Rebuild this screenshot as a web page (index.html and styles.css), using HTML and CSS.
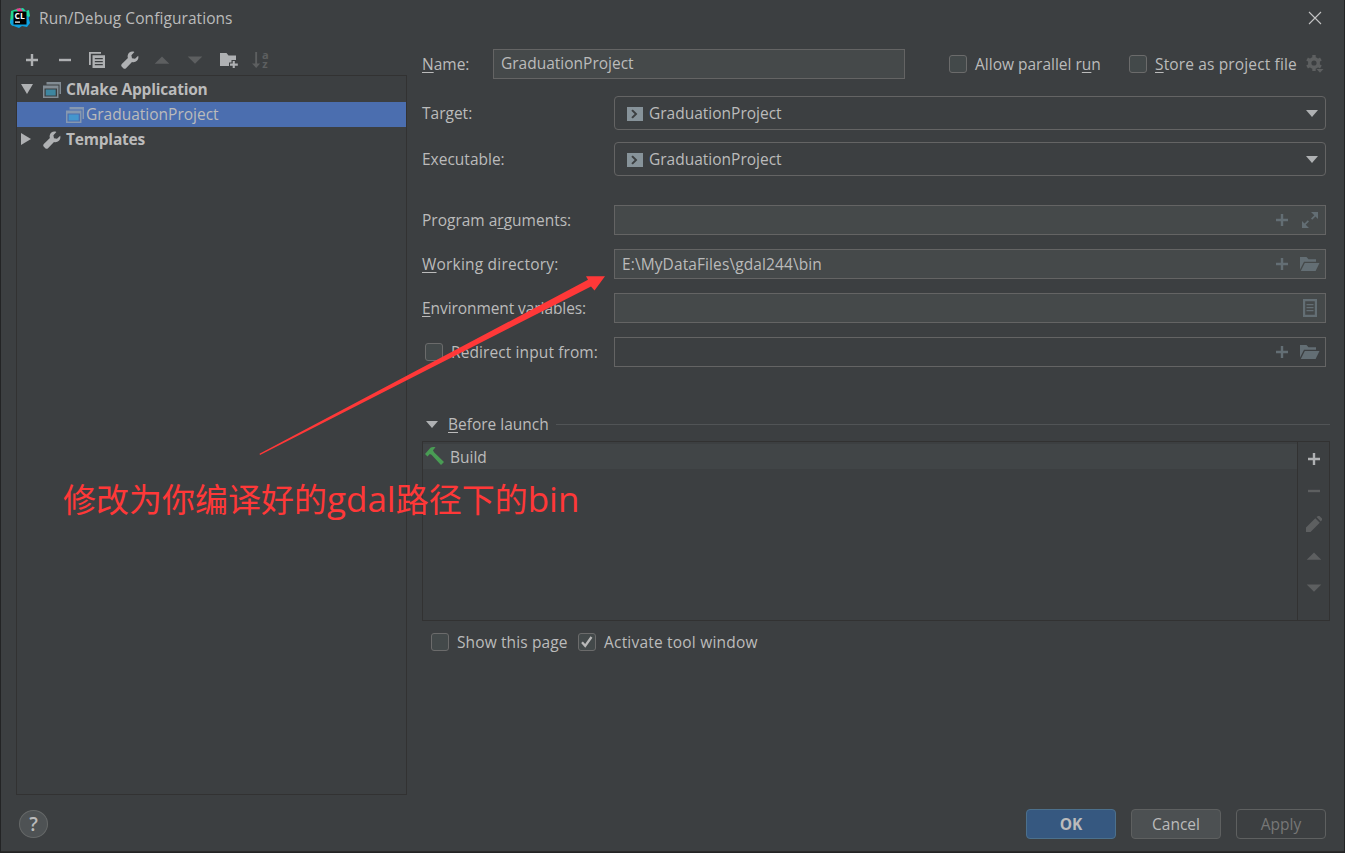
FILE: index.html
```
<!DOCTYPE html>
<html lang="en">
<head>
  <meta charset="UTF-8">
  <meta name="viewport" content="width=device-width, initial-scale=1.0">
  <title>Run/Debug Configurations</title>
  <link rel="stylesheet" href="styles.css">
</head>
<body>

  <!-- Shared icons -->
  <svg class="sprite" width="0" height="0">
    <symbol id="plus" viewBox="0 0 16 16"><path d="M6.8 2h2.4v4.8H14v2.4H9.2V14H6.8V9.2H2V6.8h4.8z"/></symbol>
    <symbol id="minus" viewBox="0 0 16 16"><path d="M2 6.8h12v2.4H2z"/></symbol>
    <symbol id="wrench" viewBox="0 0 18 18"><path d="M17.2 4.8l-3.2 3-3-.6-.6-3L13.4 1C10.6-.2 7.3 1.3 6.7 4.4c-.2.9-.1 1.7.2 2.500L.8 12.900c-.8.8-.8 2 0 2.800l1.500 1.500c.8.800 1.900.8 2.700 0l6-6.200c3.800 1 7.300-2.200 6.200-6.200z"/></symbol>
    <symbol id="up" viewBox="0 0 16 16"><path d="M8 4.500l7.300 7.300H.7z"/></symbol>
    <symbol id="down" viewBox="0 0 16 16"><path d="M8 11.800L.7 4.500h14.600z"/></symbol>
    <symbol id="app" viewBox="0 0 18 16">
      <path d="M3.500 0H18v12h-1.500V2.500h-13z" opacity=".75"/>
      <path fill-rule="evenodd" d="M0 3.500h15.500V16H0zM1.500 6.500v8H14v-8z" opacity=".75"/>
      <path class="app-fill" d="M2.700 7.500h10v6h-10z"/>
    </symbol>
    <symbol id="target" viewBox="0 0 16 14"><path fill-rule="evenodd" d="M0 0h16v14H0zM4.300 3.700L7.700 7l-3.400 3.300L5.800 11.600 10.400 7 5.800 2.400z"/></symbol>
    <symbol id="folder" viewBox="0 0 20 14"><path d="M0 0h6.500l2 2.300H16v2.500H4L0 12.500z"/><path d="M4.800 6H19.500L15.600 14H.8z"/></symbol>
  </svg>

  <div class="dialog">
    <header class="titlebar">
      <svg class="logo" viewBox="0 0 20 20">
        <path d="M1 3l7-2.500L11 8 3 18 0 15z" fill="#1fd68b"/>
        <path d="M8 1l5-1 3 3 3-1 1 6-6 6z" fill="#20d9a5"/>
        <path d="M6 1l4-1 3 3-3 3z" fill="#ec3c8f"/>
        <path d="M0 13l4-3 14-2 2 7-3 4-5-1-3 2-8-3z" fill="#0d9fe0"/>
        <path d="M3.500 3.500h13v13h-13z" fill="#000"/>
        <path d="M5 13.500h5v1.200H5z" fill="#fff"/>
        <text x="4.500" y="10.500">CL</text>
      </svg>
      <span class="title">Run/Debug Configurations</span>
      <svg class="close" viewBox="0 0 14 14"><path d="M1 1l12 12M13 1L1 13"/></svg>
    </header>

    <main class="content">
      <!-- Configuration tree -->
      <section class="sidebar">
        <div class="toolbar">
          <svg class="icon"><use href="#plus"/></svg>
          <svg class="icon"><use href="#minus"/></svg>
          <svg class="icon" viewBox="0 0 16 16"><path d="M0 0h12v1.800H1.800V13H0z"/><path fill-rule="evenodd" d="M3.500 3.300H16V16.500H3.500zM5.800 6v1.300h8V6zM5.800 9v1.300h8V9zM5.800 12v1.300h8V12z"/></svg>
          <svg class="icon big"><use href="#wrench"/></svg>
          <svg class="icon dim"><use href="#up"/></svg>
          <svg class="icon dim"><use href="#down"/></svg>
          <svg class="icon wide" viewBox="0 0 18 16"><path d="M0 1h6.500l2 2.500H16V8h-4.500v2.500H9V14H0z"/><path d="M12.700 9h2.100v2.600h3v2.100h-3v2.800h-2.100v-2.800H10v-2.100h2.700z"/></svg>
          <!-- Sort a-z -->
          <svg class="sort" viewBox="0 0 17 18"><path d="M3.200 1h1.900v11.500h3L4.200 17 0 12.500h3.200z"/><text x="10" y="8">a</text><text x="10.300" y="17">z</text></svg>
        </div>
        <div class="tree">
          <div class="tree-row">
            <svg class="arrow" viewBox="0 0 12 12"><path d="M0 1h12L6 11z"/></svg>
            <svg class="app-icon"><use href="#app"/></svg>
            <b>CMake Application</b>
          </div>
          <div class="tree-row child selected">
            <svg class="app-icon"><use href="#app"/></svg>
            <span>GraduationProject</span>
          </div>
          <div class="tree-row">
            <svg class="arrow" viewBox="0 0 12 12"><path d="M0 0l10 6-10 6z"/></svg>
            <svg class="app-icon tool"><use href="#wrench"/></svg>
            <b>Templates</b>
          </div>
        </div>
      </section>

      <!-- Settings form -->
      <section class="form">
        <div class="name-row">
          <label class="name-label"><u>N</u>ame:</label>
          <div class="field name-field">GraduationProject</div>
          <span class="box"></span>
          <label class="parallel">Allow parallel r<u>u</u>n</label>
          <span class="box"></span>
          <label class="store"><u>S</u>tore as project file</label>
          <svg class="gear" viewBox="0 0 18 18">
            <circle cx="8" cy="8" r="4.300"/>
            <path d="M8 0v4M8 12v4M1.100 4l3.400 2M11.500 10l3.400 2M1.100 12l3.400-2M11.500 6l3.400-2"/>
            <path class="gear-arrow" d="M10.500 14h7L14 17.800z"/>
          </svg>
        </div>

        <div class="row combo-row">
          <label>Target:</label>
          <div class="combo">
            <svg class="target"><use href="#target"/></svg>
            <span>GraduationProject</span>
            <svg class="caret" viewBox="0 0 12 7"><path d="M0 0h12L6 7z"/></svg>
          </div>
        </div>
        <div class="row combo-row">
          <label>Executable:</label>
          <div class="combo">
            <svg class="target"><use href="#target"/></svg>
            <span>GraduationProject</span>
            <svg class="caret" viewBox="0 0 12 7"><path d="M0 0h12L6 7z"/></svg>
          </div>
        </div>

        <div class="fields">
          <div class="row">
            <label>Program a<u>r</u>guments:</label>
            <div class="field">
              <span class="value"></span>
              <svg class="icon"><use href="#plus"/></svg>
              <svg class="folder expand" viewBox="0 0 20 16"><path d="M11 0h7v7l-2.500-2.500-3.300 3.300-1.200-1.200 3.300-3.300zM2 9l2.500 2.500 3.300-3.300 1.200 1.200-3.300 3.300L9 16H2z"/></svg>
            </div>
          </div>
          <div class="row">
            <label class="loose"><u>W</u>orking directory:</label>
            <div class="field">
              <span class="value path">E:\MyDataFiles\gdal244\bin</span>
              <svg class="icon"><use href="#plus"/></svg>
              <svg class="folder"><use href="#folder"/></svg>
            </div>
          </div>
          <div class="row">
            <label class="tight"><u>E</u>nvironment variables:</label>
            <div class="field">
              <span class="value"></span>
              <svg class="folder list" viewBox="0 0 20 18"><path fill-rule="evenodd" d="M3 0h14v18H3zM5.200 2.300v13.400h9.600V2.300z"/><path d="M6.500 5h7v1.300h-7zM6.500 8h7v1.300h-7zM6.500 11h7v1.300h-7z"/></svg>
            </div>
          </div>
          <div class="row">
            <label class="redirect"><span class="box"></span>Redirect input from:</label>
            <div class="field disabled">
              <span class="value"></span>
              <svg class="icon"><use href="#plus"/></svg>
              <svg class="folder"><use href="#folder"/></svg>
            </div>
          </div>
        </div>

        <div class="launch-head">
          <svg class="caret" viewBox="0 0 12 7"><path d="M0 0h12L6 7z"/></svg>
          <span class="launch-title"><u>B</u>efore launch</span>
          <span class="line"></span>
        </div>
        <div class="launch">
          <div class="tasks">
            <div class="task">
              <svg class="hammer" viewBox="0 0 19 18"><path d="M0 7L5.500.8C7-.2 8.500 0 10.500.3L8 3.200l1 2L19 15 16 18 6.500 7.700 4.800 7 2.500 9.500z"/></svg>
              <span>Build</span>
            </div>
          </div>
          <div class="side-tools">
            <svg class="icon"><use href="#plus"/></svg>
            <svg class="icon dim"><use href="#minus"/></svg>
            <svg class="icon dim" viewBox="0 0 16 16"><path d="M0 16v-4.500L9.300 2.200l4.500 4.500L4.500 16zM10.500 1L12 0h1.500L16 2.500V4l-1.200 1.500z"/></svg>
            <svg class="icon dim"><use href="#up"/></svg>
            <svg class="icon dim"><use href="#down"/></svg>
          </div>
        </div>

        <div class="options">
          <span class="box"></span>
          <label class="show">Show this page</label>
          <span class="box"><svg viewBox="0 0 16 16"><path d="M3 8.200l3.200 3.600L12.500 3"/></svg></span>
          <label class="loose">Activate tool window</label>
        </div>
      </section>
    </main>

    <footer class="footer">
      <span class="help">?</span>
      <span class="button primary">OK</span>
      <span class="button">Cancel</span>
      <span class="button inactive">Apply</span>
    </footer>
  </div>

  <!-- Annotation over the dialog -->
  <svg class="pointer" viewBox="0 0 1345 853"><path d="M259.500 453.800L588 279.800 586 276.200 605 276.200 594.500 290.500 591 286.500 260 455z"/></svg>
  <div class="note">修改为你编译好的<span class="latin">gdal</span>路径下的<span class="latin">bin</span></div>

</body>
</html>
```
FILE: styles.css
```
* {
  box-sizing: border-box;
}

body {
  margin: 0;
  background: #232425;
  color: #bbbbbb;
  font-family: "Open Sans", "Noto Sans CJK SC", sans-serif;
  font-size: 15.5px;
  line-height: 24px;
  white-space: nowrap;
  overflow: hidden;
}

svg {
  display: block;
  flex-shrink: 0;
  fill: #afb1b3;
}

u {
  text-decoration-thickness: 1px;
  text-underline-offset: 2px;
  text-decoration-skip-ink: none;
}

.sprite {
  position: absolute;
}

.dialog {
  display: flex;
  flex-direction: column;
  width: 1343px;
  height: 852px;
  margin-left: 1px;
  background: #3c3f41;
  border-bottom: 1px solid #2b2b2b;
}

/* Title bar */
.titlebar {
  display: flex;
  align-items: center;
  height: 37px;
  padding: 0 22px 2px 9px;
}

.title {
  letter-spacing: 0.07px;
}

.logo {
  width: 20px;
  height: 20px;
  margin-right: 9px;
}

.logo text {
  fill: #fff;
  font-size: 8.5px;
  font-weight: bold;
}

.close {
  width: 14px;
  height: 14px;
  margin-left: auto;
  stroke: #c4c4c4;
  stroke-width: 1.1;
}

.content {
  display: flex;
  gap: 15px;
  height: 758px;
  padding-left: 15px;
}

/* Left side */
.sidebar {
  width: 391px;
}

.toolbar {
  display: flex;
  align-items: center;
  gap: 16.6px;
  height: 38px;
  padding: 8px 0 0 8px;
}

.icon {
  width: 16px;
  height: 16px;
}

.toolbar .wide {
  width: 18px;
  margin-right: -2px;
}

.toolbar .big {
  width: 18px;
  height: 18px;
  margin: 0 -1px;
}

.dim {
  fill: #5d5f60;
}

.sort {
  width: 17px;
  height: 18px;
  fill: #5d5f60;
  font-size: 11px;
  font-weight: bold;
  line-height: 9px;
  overflow: visible;
}

.tree {
  height: 720px;
  padding-top: 1px;
  border: 1px solid #323232;
}

.tree-row {
  display: flex;
  align-items: center;
  height: 25px;
  padding-left: 4px;
}

.tree-row b {
  padding-bottom: 2px;
  letter-spacing: -0.2px;
}

.tree-row span {
  padding-bottom: 1px;
}

.tree-row.child {
  padding-left: 49px;
}

.selected {
  background: #4b6eaf;
}

.arrow {
  width: 12px;
  height: 12px;
  margin: 0 10px 2px 0;
}

.app-icon {
  width: 18px;
  height: 16px;
  margin-right: 5px;
  color: #3e86a0;
  fill: #9aa7b0;
}

.app-icon.tool {
  height: 18px;
  fill: #afb1b3;
}

.app-fill {
  fill: currentColor;
}

.child .app-icon {
  margin-right: 2px;
  color: #4596cd;
}

/* Right side */
.form {
  width: 908px;
}

.name-row {
  display: flex;
  align-items: center;
  height: 30px;
  margin: 12px 0 17px;
}

.name-label {
  width: 71px;
}

.field {
  display: flex;
  align-items: center;
  width: 712px;
  height: 30px;
  padding: 0 5px 0 7px;
  background: #45494a;
  border: 1px solid #646464;
}

.field .icon,
.field .folder {
  fill: #636e74;
}

.field .icon {
  margin-right: 10px;
}

.name-field {
  width: 412px;
  margin-right: 44px;
  padding-bottom: 2px;
}

.value {
  flex: 1;
}

.path {
  padding-bottom: 1px;
  letter-spacing: 0.1px;
}

.loose {
  letter-spacing: 0.2px;
}

.tight {
  letter-spacing: -0.08px;
}

.box {
  width: 18px;
  height: 18px;
  margin-bottom: 1px;
  background: #43494a;
  border: 1px solid #6b6b6b;
  border-radius: 3px;
  flex-shrink: 0;
}

.box svg {
  width: 16px;
  height: 16px;
  fill: none;
  stroke: #b8b8b8;
  stroke-width: 2.3;
}

.parallel {
  width: 154px;
  margin-left: 8px;
}

.store {
  width: 151px;
  margin-left: 8px;
  letter-spacing: 0.14px;
}

.gear {
  width: 18px;
  height: 18px;
  fill: none;
  stroke: #5d5f60;
  stroke-width: 3.4;
}

.gear-arrow {
  fill: #5d5f60;
  stroke: none;
}

.row {
  display: flex;
  align-items: center;
}

.row label {
  width: 192px;
}

.combo-row {
  margin-bottom: 12px;
}

.combo {
  display: flex;
  align-items: center;
  width: 712px;
  height: 34px;
  padding: 0 7px 0 12px;
  border: 1px solid #646464;
  border-radius: 4px;
}

.target {
  width: 16px;
  height: 14px;
  margin: 1px 6px 0 0;
  fill: #87939a;
}

.caret {
  width: 12px;
  height: 7px;
}

.combo .caret {
  margin: 1px 0 0 auto;
}

.fields {
  display: grid;
  gap: 14px;
  padding-top: 17px;
}

.folder {
  width: 20px;
  height: 14px;
}

.expand {
  height: 16px;
}

.list {
  height: 18px;
}

.row .redirect {
  display: flex;
  align-items: center;
  gap: 8px;
  padding-left: 3px;
  letter-spacing: 0.1px;
}

.disabled {
  background: #3c3f41;
}

/* Before launch */
.launch-head {
  display: flex;
  align-items: center;
  height: 24px;
  margin: 45px 0 5px;
  padding-left: 4px;
}

.launch-title {
  margin: 0 7px 0 10px;
}

.line {
  flex: 1;
  height: 1px;
  margin-top: 1px;
  background: #515456;
}

.launch {
  display: flex;
  height: 180px;
  border: 1px solid #323232;
}

.tasks {
  flex: 1;
  padding-top: 2px;
}

.task {
  display: flex;
  align-items: center;
  gap: 6px;
  height: 25px;
  padding-left: 2px;
  background: #414547;
}

.hammer {
  width: 19px;
  height: 18px;
  margin-bottom: 1px;
  fill: #499c54;
}

.side-tools {
  display: flex;
  flex-direction: column;
  align-items: center;
  gap: 16.3px;
  width: 32px;
  padding-top: 9px;
  border-left: 1px solid #323232;
}

.options {
  display: flex;
  align-items: center;
  height: 24px;
  margin-top: 9px;
  padding-left: 9px;
}

.options label {
  margin-left: 8px;
}

.options .show {
  width: 121px;
  letter-spacing: 0.12px;
}

/* Bottom buttons */
.footer {
  display: flex;
  align-items: center;
  gap: 15px;
  height: 56px;
  padding: 2px 18px 0;
}

.help {
  width: 29px;
  height: 28px;
  margin-right: auto;
  background: #4e5254;
  border: 1px solid #656868;
  border-radius: 50%;
  font-size: 19px;
  font-weight: 600;
  line-height: 27px;
  text-align: center;
}

.button {
  width: 90px;
  height: 30px;
  background: #4c5052;
  border: 1px solid #5e6060;
  border-radius: 4px;
  line-height: 29px;
  text-align: center;
}

.primary {
  background: #365880;
  border-color: #4c708c;
  font-weight: bold;
}

.inactive {
  background: none;
  color: #777777;
}

/* Annotation */
.pointer {
  position: absolute;
  top: 0;
  left: 0;
  width: 1345px;
  height: 853px;
  fill: #ff3838;
}

.note {
  position: absolute;
  top: 474px;
  left: 63px;
  color: #ff3838;
  font-family: "Noto Sans CJK SC", sans-serif;
  font-size: 33px;
  line-height: 48px;
}

.latin {
  font-family: "Open Sans", sans-serif;
  font-size: 35px;
}
```
